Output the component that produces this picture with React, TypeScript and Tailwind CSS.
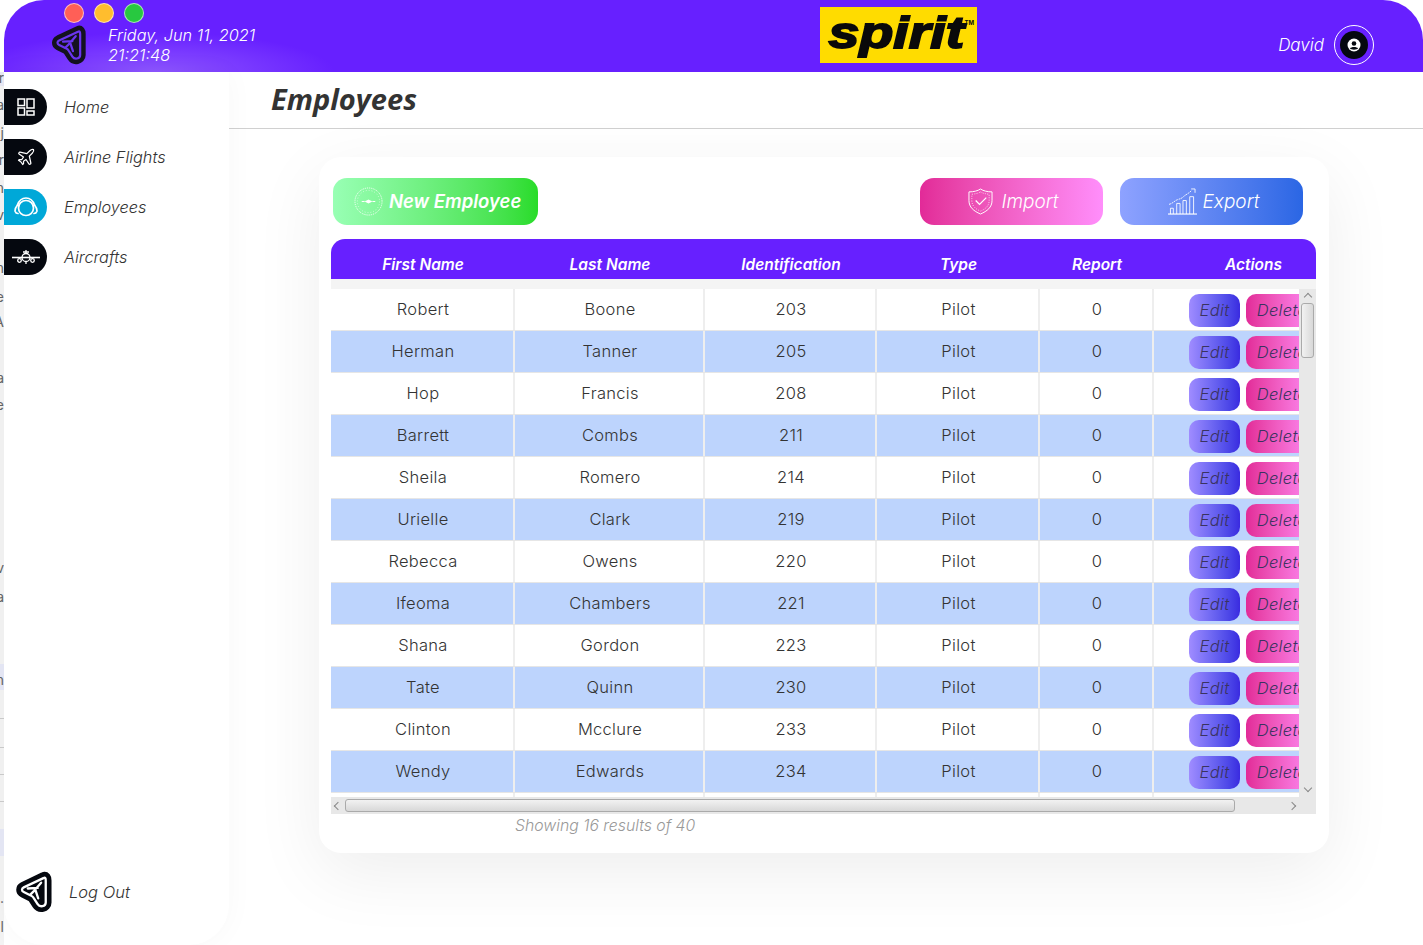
import { Plane } from 'lucide-react';

const employees = [
  ['Robert', 'Boone', '203'],
  ['Herman', 'Tanner', '205'],
  ['Hop', 'Francis', '208'],
  ['Barrett', 'Combs', '211'],
  ['Sheila', 'Romero', '214'],
  ['Urielle', 'Clark', '219'],
  ['Rebecca', 'Owens', '220'],
  ['Ifeoma', 'Chambers', '221'],
  ['Shana', 'Gordon', '223'],
  ['Tate', 'Quinn', '230'],
  ['Clinton', 'Mcclure', '233'],
  ['Wendy', 'Edwards', '234'],
];

// bits of the page that shows behind the app window on the left edge
const behind = [
  ['r', -2], ['a', 25], ['j', 53], ['r', 80], ['n', 108], ['v', 135], ['n', 188], ['e', 217], ['A', 242], ['a', 298], ['e', 325], ['v', 488], ['a', 517], ['n', 600], ['.', 818], ['l', 847],
];
const behindLines = [646, 675, 702, 729];

const LOGO_PATH = 'M27 7 10 15c-2 1-2 3 0 4l6 3c1.500.5 2 1 2.500 2l3.500 5.500c2 3 7 2 7-1.500V9c0-2-.5-3-2-2Z';

const LogoIcon = ({ className, dark, band }: { className: string; dark: string; band: string }) => (
  <svg viewBox="0 0 36 38" className={className} fill="none" strokeLinejoin="round" strokeLinecap="round">
    <path d={LOGO_PATH} fill={dark} stroke={dark} strokeWidth="10" />
    <path d={LOGO_PATH} stroke={band} strokeWidth="2" />
    <path d="M25 11 18.500 18.500M13.500 16l8.500-.5M20 17l2.500 7.500M18.500 18.500l-3 3" stroke={band} strokeWidth="2" />
  </svg>
);

const HomeIcon = () => (
  <svg viewBox="0 0 18 18" className="w-[18px] h-[18px]" fill="none" stroke="white" strokeWidth="1.500">
    <rect x="1" y="1" width="6.500" height="6.500" />
    <rect x="10" y="1" width="7" height="9" />
    <rect x="1" y="10" width="6.500" height="7" />
    <rect x="10" y="13" width="7" height="4" />
  </svg>
);

const HeadsetIcon = () => (
  <svg viewBox="0 0 24 22" className="w-[24px] h-[22px]" fill="none" stroke="white" strokeWidth="1.700" strokeLinecap="round">
    <circle cx="12" cy="12" r="7.500" />
    <path d="M3.500 9C5 4.500 8.500 2 12 2s7 2.500 8.500 7" />
    <path d="M3.500 9C1.500 11.500 .8 14 1.200 15.500c.5 1.500 1.500 2 2.800 2M20.500 9c2 2.500 2.700 5 2.300 6.500-.5 1.500-1.500 2-2.800 2" />
  </svg>
);

const AircraftIcon = () => (
  <svg viewBox="0 0 28 16" className="w-[28px] h-[16px]" fill="none" stroke="white" strokeWidth="1.300">
    <path d="M0 8.500h28" strokeWidth="1.600" />
    <circle cx="14" cy="8.500" r="4" />
    <path d="M14 1v3.500M11 3h6" />
    <circle cx="7.500" cy="11.500" r="1.800" />
    <circle cx="20.500" cy="11.500" r="1.800" />
    <path d="M14 12.500V15" />
  </svg>
);

const CompassIcon = () => (
  <svg viewBox="0 0 30 30" className="w-[29px] h-[29px]" fill="none" stroke="white">
    <circle cx="15" cy="15" r="14" strokeWidth="1" strokeDasharray="1 1" />
    <circle cx="15" cy="15" r="11.500" strokeWidth=".6" strokeDasharray="1 2" />
    <path d="M8 15h3M19 15h3" strokeWidth="1" />
    <path d="m11 15 4-2 4 2-4 2Z" fill="white" stroke="none" />
  </svg>
);

const ShieldIcon = () => (
  <svg viewBox="0 0 26 28" className="w-[25px] h-[27px]" fill="none" stroke="white" strokeWidth="1">
    <path d="M13 1c3 2 7 3 12 3v9c0 7-5 11-12 14C6 24 1 20 1 13V4c5 0 9-1 12-3Z" />
    <path d="M13 4c2.500 1.500 5 2 9 2.500V13c0 5.500-4 9-9 11-5-2-9-5.500-9-11V6.500C8 6 10.500 5.500 13 4Z" strokeDasharray="1 1.500" strokeWidth=".8" />
    <path d="m8 13 4 4 7-7" strokeWidth="1.300" />
  </svg>
);

const ChartIcon = () => (
  <svg viewBox="0 0 30 28" className="w-[29px] h-[27px]" fill="none" stroke="white" strokeWidth=".9">
    <path d="M0 27h30" strokeWidth="1.200" />
    <path d="M2.500 27v-6h3v6M9 27V16h3.500v11M15.500 27V13h3.500v14M22.500 27V9h4v18" />
    <path d="M1 17c4-1 6-4 9-5s4-1 6-3 5-3 8-6" strokeDasharray="2 .8" />
    <path d="M24 1h4v4" />
  </svg>
);

const UserIcon = () => (
  <svg viewBox="0 0 14 14" className="w-[14px] h-[14px]">
    <circle cx="7" cy="7" r="6.500" fill="white" />
    <circle cx="7" cy="5.500" r="2.300" fill="#05080f" />
    <path d="M3 10.500c1-2 7-2 8 0-1 1.500-7 1.500-8 0Z" fill="#05080f" />
  </svg>
);

const NavItem = ({ label, active, children }: { label: string; active?: boolean; children: React.ReactNode }) => (
  <div className="flex items-center h-9">
    <div className={`w-[43px] h-9 rounded-r-[18px] flex items-center justify-center ${active ? 'bg-[#00a8d8]' : 'bg-[#05080f]'}`}>
      {children}
    </div>
    <span className="ml-[17px] text-[16.300px] italic font-light text-[#333] leading-[34px]">{label}</span>
  </div>
);

const Row = ({ emp, blue }: { emp?: string[]; blue: boolean }) => (
  <div className={`flex h-[42px] shrink-0 items-center text-[16.500px] tracking-[0.3px] text-[#333] font-light border-b border-[#e6e6e6] ${blue ? 'bg-[#bdd4fd]' : 'bg-white'}`}>
    <div className="w-[184px] h-full flex items-center justify-center border-r-2 border-[#eee] pl-[2px]">{emp?.[0]}</div>
    <div className="w-[190px] h-full flex items-center justify-center border-r-2 border-[#eee] pl-[2px]">{emp?.[1]}</div>
    <div className="w-[172px] h-full flex items-center justify-center border-r-2 border-[#eee] pl-[2px]">{emp?.[2]}</div>
    <div className="w-[163px] h-full flex items-center justify-center border-r-2 border-[#eee] pl-[2px]">{emp && 'Pilot'}</div>
    <div className="w-[114px] h-full flex items-center justify-center border-r-2 border-[#eee] pl-[2px]">{emp && '0'}</div>
    <div className="w-[145px] h-full flex items-center overflow-hidden pt-[1px]">
      {emp && (
        <div className="flex gap-[6px] pl-[35px] shrink-0">
          <div className="w-[51px] h-[33px] rounded-[10px] bg-gradient-to-r from-[#a08cff] to-[#3a2ae0] flex items-center justify-center italic text-[#3a3360]">Edit</div>
          <div className="w-[72px] h-[33px] rounded-[10px] bg-gradient-to-r from-[#e22a98] to-[#ff8efb] flex items-center justify-center italic text-[#3a3360]">Delete</div>
        </div>
      )}
    </div>
  </div>
);

export default function App() {
  return (
    <div className="relative h-[945px] w-full overflow-hidden bg-white flex flex-col [font-family:Inter,sans-serif]">
      <header className="relative h-[72px] ml-[4px] shrink-0 rounded-t-[40px] bg-[#6720ff] bg-[radial-gradient(ellipse_180px_40px_at_150px_72px,#8d55ff,transparent)] flex items-start">
        {/* window buttons */}
        <div className="absolute left-[60px] top-[3px] flex gap-[10px]">
          <span className="w-5 h-5 rounded-full bg-[#ff5f57] border border-white/60" />
          <span className="w-5 h-5 rounded-full bg-[#ffbd2e] border border-white/60" />
          <span className="w-5 h-5 rounded-full bg-[#28c840] border border-white/60" />
        </div>
        <div className="ml-[44px] mt-[24px] w-[40px]">
          <LogoIcon className="w-[40px] h-[42px]" dark="#14121f" band="#6a35f0" />
        </div>
        <div className="ml-[20px] mt-[25px] w-[150px] text-white text-[16.300px] italic font-light leading-[20px] whitespace-nowrap">
          <div>Friday, Jun 11, 2021</div>
          <div>21:21:48</div>
        </div>
        <div className="relative ml-[562px] mt-[7px] w-[157px] h-[56px] bg-[#ffdc00] flex items-center justify-center overflow-hidden">
          <span className="block origin-center scale-x-[1.26] text-[#0a0a0a] text-[44px] font-bold italic leading-none pb-[5px] pr-[3px] [font-family:'Liberation_Sans',sans-serif] [-webkit-text-stroke:1.800px_#0a0a0a]">spirit</span>
          <span className="absolute right-[3px] top-[13px] text-[6px] font-bold leading-none text-[#0a0a0a]">TM</span>
        </div>
        <span className="ml-auto mt-[35px] text-white text-[17px] italic font-light leading-5">David</span>
        <div className="ml-[10px] mr-[49px] mt-[25px] w-10 h-10 rounded-full border border-white flex items-center justify-center">
          <div className="w-7 h-7 rounded-full bg-[#05080f] flex items-center justify-center">
            <UserIcon />
          </div>
        </div>
      </header>

      <div className="flex flex-1 min-h-0">
        {/* page behind the app window */}
        <div className="relative w-[4px] shrink-0 bg-[#f3f3f3] overflow-hidden text-[14px] text-[#666]">
          <div className="absolute inset-x-0 top-0 h-[14px] bg-[#e8e8f4]" />
          <div className="absolute inset-x-0 top-[592px] h-[26px] bg-[#e6e8f6]" />
          <div className="absolute inset-x-0 top-[757px] h-[27px] bg-[#e6e8f6]" />
          {behindLines.map((top) => (
            <div key={top} className="absolute inset-x-0 h-px bg-[#ccc]" style={{ top }} />
          ))}
          {behind.map(([c, top]) => (
            <span key={`${c}${top}`} className="absolute right-0 leading-4" style={{ top: Number(top) }}>{c}</span>
          ))}
        </div>

        <aside className="w-[225px] shrink-0 bg-white rounded-b-[40px] shadow-[0_0_30px_rgba(0,0,0,0.03)] flex flex-col pt-[17px] gap-[14px] relative">
          <NavItem label="Home"><HomeIcon /></NavItem>
          <NavItem label="Airline Flights"><Plane size={20} color="white" strokeWidth={1.5} /></NavItem>
          <NavItem label="Employees" active><HeadsetIcon /></NavItem>
          <NavItem label="Aircrafts"><AircraftIcon /></NavItem>
          <div className="mt-auto mb-[31px] ml-[8px] flex items-center">
            <LogoIcon className="w-[42px] h-[44px]" dark="#05080f" band="#ffffff" />
            <span className="ml-[15px] text-[16.500px] italic font-light text-[#333]">Log Out</span>
          </div>
        </aside>

        <main className="flex-1 min-w-0 flex flex-col">
          <div className="h-[57px] shrink-0 border-b border-[#d0d0d0] pl-[42px] flex items-center text-[29px] font-bold italic text-[#333] [font-family:'Open_Sans',sans-serif] pb-[2px]">
            Employees
          </div>
          <div className="pl-[90px] pt-[28px]">
            <div className="w-[1010px] h-[696px] rounded-[22px] bg-white shadow-[0_20px_70px_rgba(0,0,0,0.07)] pt-[21px] pl-[12px] pr-[13px]">
              <div className="flex h-[47px] pl-[2px] pr-[13px]">
                <button className="w-[205px] rounded-[14px] bg-gradient-to-r from-[#98ffb4] to-[#28dc28] flex items-center pl-[21px] gap-[6px] text-white text-[18.500px] font-semibold italic whitespace-nowrap">
                  <CompassIcon />
                  New Employee
                </button>
                <button className="ml-auto w-[183px] rounded-[14px] bg-gradient-to-r from-[#e22a98] to-[#ff8efb] flex items-center justify-center gap-[8px] text-white text-[19px] font-light italic pl-[4px]">
                  <ShieldIcon />
                  <span className="pt-[2px]">Import</span>
                </button>
                <button className="ml-[17px] w-[183px] rounded-[14px] bg-gradient-to-r from-[#8ea2ff] to-[#2a66e4] flex items-center justify-center gap-[6px] text-white text-[19px] font-light italic pl-[4px]">
                  <ChartIcon />
                  <span className="pt-[2px]">Export</span>
                </button>
              </div>

              <div className="mt-[14px] h-10 rounded-t-[14px] bg-[#6720ff] flex items-end pb-[4px] text-white text-[15.500px] font-semibold italic leading-[20px]">
                <div className="w-[184px] text-center">First Name</div>
                <div className="w-[190px] text-center">Last Name</div>
                <div className="w-[172px] text-center">Identification</div>
                <div className="w-[163px] text-center">Type</div>
                <div className="w-[114px] text-center">Report</div>
                <div className="w-[145px] text-right pr-[17px]">Actions</div>
              </div>

              <div className="h-[535px] bg-[#f4f4f4] pt-[10px] flex flex-col">
                <div className="flex flex-1 min-h-0">
                  <div className="w-[968px] flex flex-col overflow-hidden">
                    {employees.map((emp, i) => (
                      <Row key={emp[2]} emp={emp} blue={i % 2 === 1} />
                    ))}
                    <Row blue={false} />
                  </div>
                  {/* vertical scrollbar */}
                  <div className="w-[17px] bg-[#e8e8e8] flex flex-col items-center">
                    <span className="w-[6px] h-[6px] mt-[5px] border-l border-t border-[#888] rotate-45" />
                    <div className="mt-[3px] w-[13px] h-[55px] rounded-[3px] border border-[#aaa] bg-gradient-to-r from-[#f2f2f2] to-[#d8d8d8]" />
                    <span className="mt-auto mb-[6px] w-[6px] h-[6px] border-r border-b border-[#888] rotate-45" />
                  </div>
                </div>
                {/* horizontal scrollbar */}
                <div className="h-[17px] shrink-0 bg-[#e8e8e8] flex items-center">
                  <span className="ml-[4px] w-[6px] h-[6px] border-l border-b border-[#888] rotate-45" />
                  <div className="ml-[4px] w-[890px] h-[13px] rounded-[3px] border border-[#aaa] bg-gradient-to-b from-[#f2f2f2] to-[#d8d8d8]" />
                  <span className="ml-[54px] w-[6px] h-[6px] border-r border-t border-[#888] rotate-45" />
                </div>
              </div>

              <div className="pl-[184px] pt-[1px] text-[15.800px] italic font-light text-[#999] leading-[22px]">Showing 16 results of 40</div>
            </div>
          </div>
        </main>
      </div>
    </div>
  );
}
